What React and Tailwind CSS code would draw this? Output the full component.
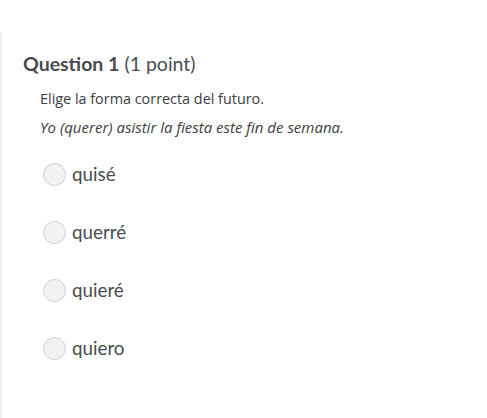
import React from 'react';

const options = ['quisé', 'querré', 'quieré', 'quiero'];

export default function App() {
  return (
    <div className="w-[487px] h-[418px] bg-white pt-[33px]">
      <div className="h-full border-l-2 border-[#f0f0f0] pl-[21px] pt-[17px] text-[#494c4e]">
        <h2 className="text-[19.5px] leading-[27px] font-['Lato',sans-serif]">
          <span className="font-bold">Question 1</span>{' '}
          <span className="font-normal">(1 point)</span>
        </h2>
        <div className="pl-[17px] pt-[12px] font-['Open_Sans',sans-serif] text-[#3c3e40]">
          <p className="text-[14.4px] leading-[20px]">Elige la forma correcta del futuro.</p>
          <p className="text-[15px] leading-[20px] mt-[8px] italic">Yo (querer) asistir la fiesta este fin de semana.</p>
        </div>
        <div className="pl-[20px] pt-[25px] flex flex-col gap-[34px]">
          {options.map((opt) => (
            <label key={opt} className="flex items-center gap-[6px] h-[24px]">
              <span className="w-[23px] h-[23px] rounded-full border border-[#cdd0d3] bg-[#f1f2f4] shrink-0" />
              <span className="font-['Lato',sans-serif] text-[18.8px] text-[#494c4e]">{opt}</span>
            </label>
          ))}
        </div>
      </div>
    </div>
  );
}
